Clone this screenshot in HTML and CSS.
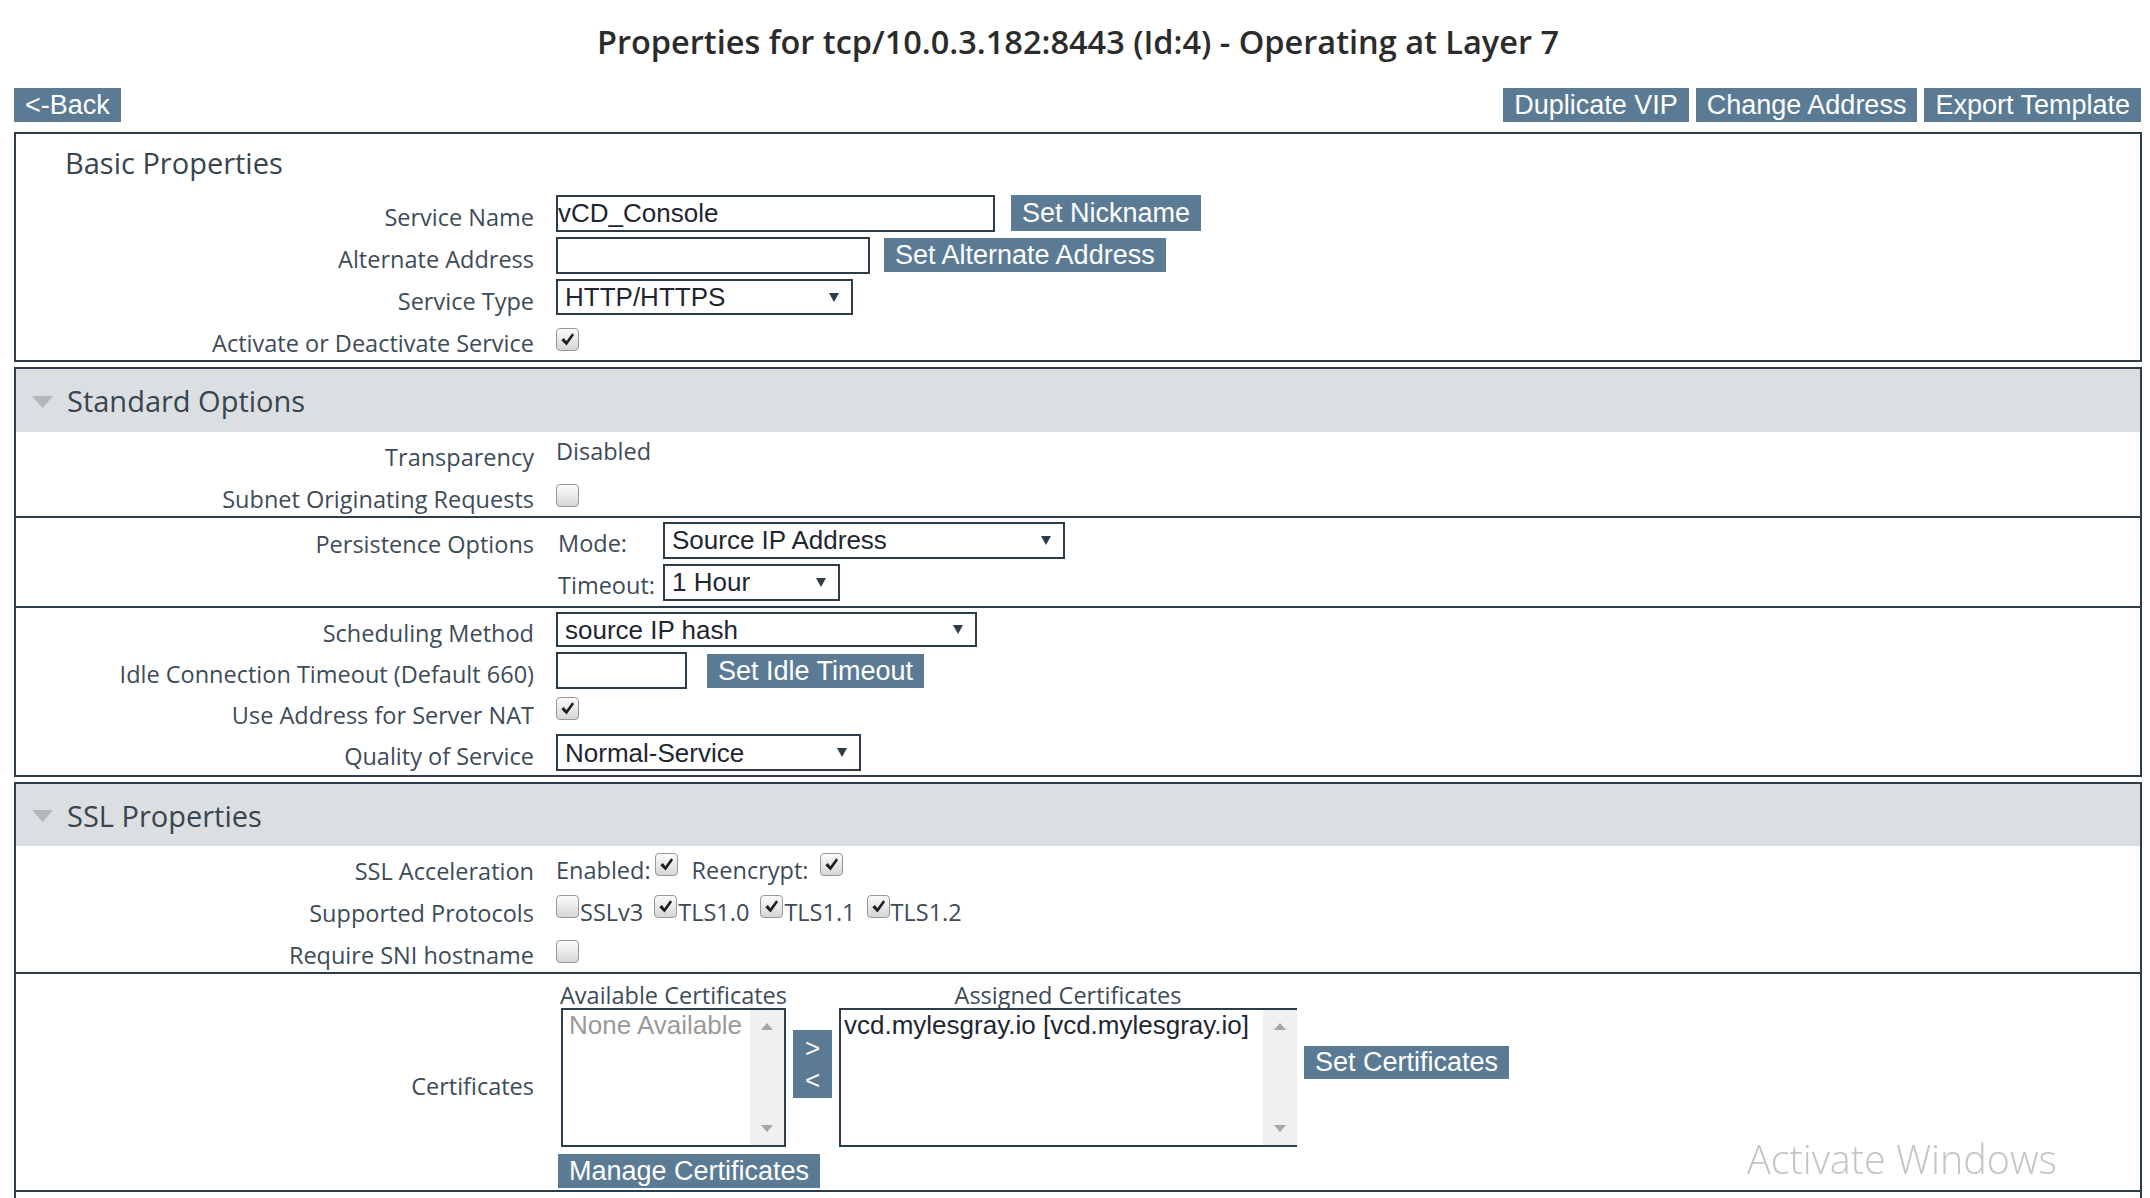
FILE: index.html
```html
<!DOCTYPE html>
<html>
<head>
<meta charset="utf-8">
<title>Properties</title>
<link rel="stylesheet" href="styles.css">
</head>
<body>
<h1 class="title">Properties for tcp/10.0.3.182:8443 (Id:4) - Operating at Layer 7</h1>
<div class="toolbar">
  <button class="btn">&lt;-Back</button>
  <div class="toolbar-right">
    <button class="btn">Duplicate VIP</button>
    <button class="btn">Change Address</button>
    <button class="btn">Export Template</button>
  </div>
</div>

<section class="panel basic">
  <div class="panel-title">Basic Properties</div>
  <div class="row r42">
    <div class="lbl">Service Name</div>
    <div class="ctl">
      <div class="input w-name">vCD_Console</div>
      <button class="btn btn-tall gap16">Set Nickname</button>
    </div>
  </div>
  <div class="row r42">
    <div class="lbl">Alternate Address</div>
    <div class="ctl">
      <div class="input w-alt"></div>
      <button class="btn gap14">Set Alternate Address</button>
    </div>
  </div>
  <div class="row r42">
    <div class="lbl">Service Type</div>
    <div class="ctl">
      <div class="select w-type"><span>HTTP/HTTPS</span><svg class="arr" width="10" height="9" viewBox="0 0 10 9"><polygon points="0,0 10,0 5,9"/></svg></div>
    </div>
  </div>
  <div class="row r42">
    <div class="lbl">Activate or Deactivate Service</div>
    <div class="ctl">
      <span class="cb on"><svg viewBox="0 0 16 16"><path d="M2.2 8.6 L4.6 6.6 L6.9 9.6 L12.4 2.2 L14.2 3.8 L7.1 13.6 Z"/></svg></span>
    </div>
  </div>
</section>

<section class="panel">
  <div class="panel-head"><svg class="tri" width="21" height="12" viewBox="0 0 21 12"><polygon points="0,0 21,0 10.5,12"/></svg><span>Standard Options</span></div>
  <div class="group g-std1">
    <div class="row r42">
      <div class="lbl">Transparency</div>
      <div class="ctl"><span class="txt up">Disabled</span></div>
    </div>
    <div class="row r42">
      <div class="lbl">Subnet Originating Requests</div>
      <div class="ctl"><span class="cb"></span></div>
    </div>
  </div>
  <div class="group g-persist">
    <div class="row r42">
      <div class="lbl">Persistence Options</div>
      <div class="ctl">
        <span class="txt sub">Mode:</span>
        <div class="select w-mode"><span>Source IP Address</span><svg class="arr" width="10" height="9" viewBox="0 0 10 9"><polygon points="0,0 10,0 5,9"/></svg></div>
      </div>
    </div>
    <div class="row r42">
      <div class="lbl"></div>
      <div class="ctl">
        <span class="txt sub">Timeout:</span>
        <div class="select w-timeout"><span>1 Hour</span><svg class="arr" width="10" height="9" viewBox="0 0 10 9"><polygon points="0,0 10,0 5,9"/></svg></div>
      </div>
    </div>
  </div>
  <div class="group g-sched">
    <div class="row r41">
      <div class="lbl">Scheduling Method</div>
      <div class="ctl">
        <div class="select w-sched"><span>source IP hash</span><svg class="arr" width="10" height="9" viewBox="0 0 10 9"><polygon points="0,0 10,0 5,9"/></svg></div>
      </div>
    </div>
    <div class="row r41">
      <div class="lbl">Idle Connection Timeout (Default 660)</div>
      <div class="ctl">
        <div class="input w-idle"></div>
        <button class="btn gap20">Set Idle Timeout</button>
      </div>
    </div>
    <div class="row r41">
      <div class="lbl">Use Address for Server NAT</div>
      <div class="ctl"><span class="cb on raise"><svg viewBox="0 0 16 16"><path d="M2.2 8.6 L4.6 6.6 L6.9 9.6 L12.4 2.2 L14.2 3.8 L7.1 13.6 Z"/></svg></span></div>
    </div>
    <div class="row r41">
      <div class="lbl">Quality of Service</div>
      <div class="ctl">
        <div class="select w-qos"><span>Normal-Service</span><svg class="arr" width="10" height="9" viewBox="0 0 10 9"><polygon points="0,0 10,0 5,9"/></svg></div>
      </div>
    </div>
  </div>
</section>

<section class="panel">
  <div class="panel-head ssl-head"><svg class="tri" width="21" height="12" viewBox="0 0 21 12"><polygon points="0,0 21,0 10.5,12"/></svg><span>SSL Properties</span></div>
  <div class="group">
    <div class="row r42">
      <div class="lbl">SSL Acceleration</div>
      <div class="ctl">
        <span class="txt">Enabled:</span>
        <span class="cb on raise ml4"><svg viewBox="0 0 16 16"><path d="M2.2 8.6 L4.6 6.6 L6.9 9.6 L12.4 2.2 L14.2 3.8 L7.1 13.6 Z"/></svg></span>
        <span class="txt ml14">Reencrypt:</span>
        <span class="cb on raise ml12"><svg viewBox="0 0 16 16"><path d="M2.2 8.6 L4.6 6.6 L6.9 9.6 L12.4 2.2 L14.2 3.8 L7.1 13.6 Z"/></svg></span>
      </div>
    </div>
    <div class="row r42">
      <div class="lbl">Supported Protocols</div>
      <div class="ctl protos">
        <span class="cb raise"></span><span class="txt pt">SSLv3</span>
        <span class="cb on raise ml11"><svg viewBox="0 0 16 16"><path d="M2.2 8.6 L4.6 6.6 L6.9 9.6 L12.4 2.2 L14.2 3.8 L7.1 13.6 Z"/></svg></span><span class="txt pt">TLS1.0</span>
        <span class="cb on raise ml11"><svg viewBox="0 0 16 16"><path d="M2.2 8.6 L4.6 6.6 L6.9 9.6 L12.4 2.2 L14.2 3.8 L7.1 13.6 Z"/></svg></span><span class="txt pt">TLS1.1</span>
        <span class="cb on raise ml11"><svg viewBox="0 0 16 16"><path d="M2.2 8.6 L4.6 6.6 L6.9 9.6 L12.4 2.2 L14.2 3.8 L7.1 13.6 Z"/></svg></span><span class="txt pt">TLS1.2</span>
      </div>
    </div>
    <div class="row r42">
      <div class="lbl">Require SNI hostname</div>
      <div class="ctl"><span class="cb"></span></div>
    </div>
  </div>
  <div class="group g-certs">
    <div class="row cert-row">
      <div class="lbl">Certificates</div>
      <div class="certs">
        <div class="certcol avail">
          <div class="cap">Available Certificates</div>
          <div class="listbox lb-avail">
            <div class="lb-text muted">None Available</div>
            <div class="sb"><svg width="12" height="7" viewBox="0 0 12 7"><polygon points="6,0 12,7 0,7"/></svg><svg width="12" height="7" viewBox="0 0 12 7"><polygon points="0,0 12,0 6,7"/></svg></div>
          </div>
          <button class="btn manage">Manage Certificates</button>
        </div>
        <div class="arrows"><span>&gt;</span><span>&lt;</span></div>
        <div class="certcol assigned">
          <div class="cap">Assigned Certificates</div>
          <div class="listbox lb-assigned">
            <div class="lb-text">vcd.mylesgray.io [vcd.mylesgray.io]</div>
            <div class="sb"><svg width="12" height="7" viewBox="0 0 12 7"><polygon points="6,0 12,7 0,7"/></svg><svg width="12" height="7" viewBox="0 0 12 7"><polygon points="0,0 12,0 6,7"/></svg></div>
          </div>
        </div>
        <button class="btn setcert">Set Certificates</button>
      </div>
    </div>
  </div>
  <div class="group g-rest"></div>
</section>

<div class="watermark">
  <div class="wm1">Activate Windows</div>
  <div class="wm2">Go to Settings to activate Windows.</div>
</div>
</body>
</html>
```

FILE: styles.css
```css
html, body {
  overflow: hidden;
}
body {
  margin: 0;
  padding: 0 8px 0 14px;
  background: #ffffff;
  font-family: "Open Sans", "DejaVu Sans", sans-serif;
  font-size: 23.5px;
  color: #3d4b58;
}

.title {
  margin: 0;
  padding-top: 22px;
  height: 40px;
  line-height: 40px;
  font-size: 32.5px;
  font-weight: 600;
  text-align: center;
  color: #2b2b2b;
}

.toolbar {
  margin-top: 26px;
  display: flex;
  justify-content: space-between;
  align-items: flex-start;
}
.toolbar-right {
  display: flex;
  gap: 7px;
  margin-right: 1px;
}

.btn {
  display: inline-block;
  box-sizing: border-box;
  height: 34px;
  line-height: 34px;
  padding: 0 11px;
  border: none;
  margin: 0;
  background: #5b7b95;
  color: #ffffff;
  font-family: "Liberation Sans", Arial, sans-serif;
  font-size: 27px;
  white-space: nowrap;
  cursor: pointer;
}
.btn-tall { height: 36px; line-height: 36px; }
.gap16 { margin-left: 16px; }
.gap14 { margin-left: 14px; }
.gap20 { margin-left: 20px; }

.panel {
  border: 2px solid #2d3c4a;
  margin-top: 5px;
}
.basic { margin-top: 10px; }

.panel-title {
  height: 58px;
  line-height: 58px;
  padding-left: 49px;
  font-size: 29px;
  color: #37454f;
}

.panel-head {
  height: 63px;
  background: #dcdfe1;
  display: flex;
  align-items: center;
  padding-left: 16px;
  font-size: 29px;
  color: #37454f;
}
.ssl-head { height: 62px; }
.tri {
  fill: #b3b7bb;
  margin-right: 14px;
  margin-top: 2px;
}

.group + .group { border-top: 2px solid #2d3c4a; }
.g-persist { padding: 1px 0 3px; }
.g-sched { padding: 1px 0 2px; }
.g-rest { height: 40px; }

.row {
  display: grid;
  grid-template-columns: 518px 1fr;
  column-gap: 22px;
  align-items: center;
}
.r42 { height: 42px; }
.r41 { height: 41px; }

.lbl {
  text-align: right;
  padding-top: 7px;
  white-space: nowrap;
}

.ctl {
  display: flex;
  align-items: center;
  height: 100%;
}

.txt { white-space: nowrap; padding-top: 6px; }
.txt.up { padding-top: 0; margin-bottom: 4px; }
.txt.sub { width: 105px; padding-left: 2px; }
.txt.pt { margin-left: 1px; }
.ml4 { margin-left: 4px; }
.ml11 { margin-left: 11px; }
.ml12 { margin-left: 12px; }
.ml14 { margin-left: 14px; }

.input, .select {
  box-sizing: border-box;
  height: 37px;
  border: 2px solid #2d3c4a;
  background: #ffffff;
  font-family: "Liberation Sans", Arial, sans-serif;
  font-size: 26px;
  color: #1e2630;
  white-space: nowrap;
}
.input {
  line-height: 33px;
  padding-left: 0;
}
.select {
  display: flex;
  align-items: center;
  justify-content: space-between;
  padding: 0 12px 0 7px;
  height: 36px;
}
.select span { line-height: 32px; }
.arr { fill: #2d3c4a; flex: none; }

.w-name { width: 439px; }
.w-alt { width: 314px; }
.w-type { width: 297px; }
.w-mode { width: 402px; height: 37px; }
.w-timeout { width: 177px; height: 37px; }
.w-sched { width: 421px; height: 35px; }
.w-idle { width: 131px; }
.w-qos { width: 305px; height: 37px; }

.cb {
  box-sizing: border-box;
  width: 23px;
  height: 23px;
  border: 1px solid #989898;
  border-radius: 4px;
  background: linear-gradient(#fbfbfb, #d6d6d6);
  display: inline-flex;
  align-items: center;
  justify-content: center;
  flex: none;
}
.cb svg {
  width: 17px;
  height: 17px;
  fill: #1f1f1f;
}
.cb.raise { margin-bottom: 6px; }

.cert-row {
  align-items: center;
  height: 216px;
}
.certs {
  display: flex;
  align-items: flex-start;
  height: 100%;
  padding-top: 8px;
  box-sizing: border-box;
}
.certcol {
  display: flex;
  flex-direction: column;
  align-items: flex-start;
}
.avail { width: 230px; }
.cap {
  height: 26px;
  line-height: 26px;
  align-self: stretch;
  display: flex;
  justify-content: center;
  padding-left: 5px;
  white-space: nowrap;
}
.listbox {
  box-sizing: border-box;
  height: 139px;
  border: 2px solid #2d3c4a;
  display: flex;
  background: #ffffff;
}
.lb-avail { width: 225px; margin-left: 5px; }
.lb-assigned { width: 458px; border-right: none; }
.assigned .cap { padding-left: 0; }
.lb-text {
  flex: 1;
  font-family: "Liberation Sans", Arial, sans-serif;
  font-size: 26px;
  line-height: 30px;
  color: #1e2630;
  padding-left: 3px;
  white-space: nowrap;
  overflow: hidden;
}
.lb-text.muted { color: #9a9a9a; padding-left: 6px; }
.sb {
  width: 34px;
  background: #f0f0f0;
  display: flex;
  flex-direction: column;
  align-items: center;
  justify-content: space-between;
  padding: 13px 0 13px;
  box-sizing: border-box;
}
.sb svg { fill: #a6a6a6; }

.arrows {
  margin-left: 7px;
  margin-top: 48px;
  width: 39px;
  height: 68px;
  background: #5b7b95;
  color: #ffffff;
  display: flex;
  flex-direction: column;
  align-items: center;
  justify-content: center;
  font-family: "Liberation Sans", Arial, sans-serif;
  font-size: 26px;
  line-height: 32px;
}
.assigned { margin-left: 7px; }
.setcert {
  margin-left: 7px;
  margin-top: 64px;
  height: 33px;
  line-height: 33px;
}
.manage {
  margin-left: 2px;
  margin-top: 7px;
}

.watermark {
  position: fixed;
  left: 1747px;
  top: 1133px;
  color: #c4c4c4;
  font-family: "Open Sans", "DejaVu Sans", sans-serif;
  font-weight: 300;
  pointer-events: none;
}
.wm1 { font-size: 39.5px; line-height: 52px; white-space: nowrap; }
.wm2 { font-size: 23px; line-height: 30px; margin-top: 8px; white-space: nowrap; }
```
